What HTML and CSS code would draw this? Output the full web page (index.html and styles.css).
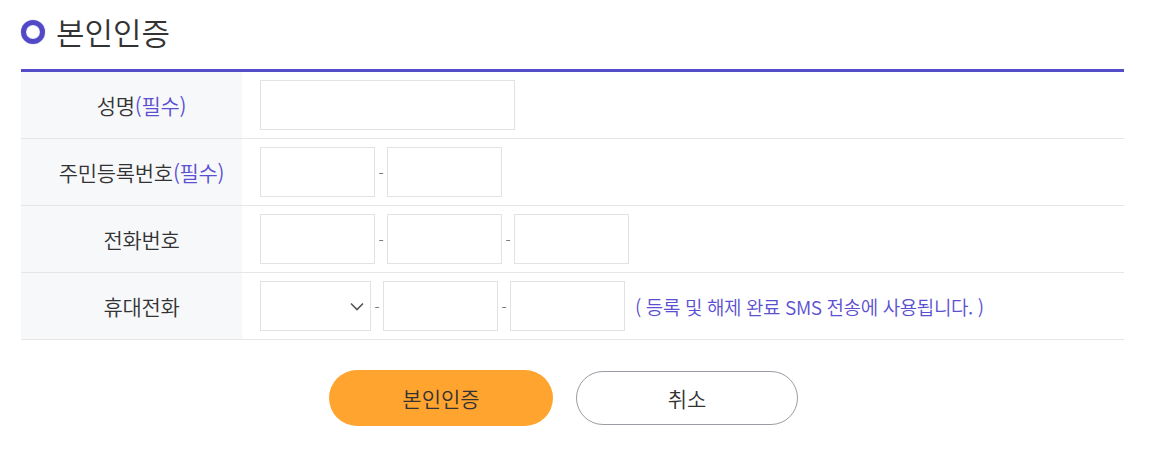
FILE: index.html
```html
<!DOCTYPE html>
<html lang="ko">
<head>
<meta charset="utf-8">
<title>본인인증</title>
<link rel="stylesheet" href="styles.css">
</head>
<body>
<div class="wrap">
  <h2 class="title"><span class="ring"></span>본인인증</h2>
  <div class="form">
    <div class="row">
      <div class="label">성명<em>(필수)</em></div>
      <div class="field"><input class="inp wide" type="text"></div>
    </div>
    <div class="row">
      <div class="label">주민등록번호<em>(필수)</em></div>
      <div class="field"><input class="inp" type="text"><span class="dash">-</span><input class="inp" type="password"></div>
    </div>
    <div class="row">
      <div class="label">전화번호</div>
      <div class="field"><input class="inp" type="text"><span class="dash">-</span><input class="inp" type="text"><span class="dash">-</span><input class="inp" type="text"></div>
    </div>
    <div class="row">
      <div class="label">휴대전화</div>
      <div class="field">
        <div class="sel"><select><option></option><option>010</option><option>011</option></select>
          <svg class="chev" width="14" height="9" viewBox="0 0 14 9"><path d="M1 1.5 L7 7.5 L13 1.5" fill="none" stroke="#555" stroke-width="1.6"/></svg>
        </div><span class="dash">-</span><input class="inp" type="text"><span class="dash">-</span><input class="inp" type="text"><span class="notice">( 등록 및 해제 완료 SMS 전송에 사용됩니다. )</span>
      </div>
    </div>
  </div>
  <div class="btns">
    <button class="btn primary" type="button">본인인증</button>
    <button class="btn cancel" type="button">취소</button>
  </div>
</div>
</body>
</html>
```
FILE: styles.css
```css
* { box-sizing: border-box; }
body {
  margin: 0;
  background: #fff;
  font-family: "Noto Sans CJK KR", "Noto Sans", sans-serif;
  font-weight: 350;
  color: #333;
}
.wrap {
  width: 1103px;
  margin-left: 21px;
}
.title {
  display: flex;
  align-items: flex-start;
  margin: 0;
  padding-top: 11px;
  height: 72px;
  font-size: 31px;
  font-weight: 350;
  line-height: 42px;
  color: #333;
  border-bottom: 3px solid #544cc8;
}
.ring {
  width: 24px;
  height: 24px;
  border-radius: 50%;
  border: 5px solid #5149c6;
  box-shadow: 0 0 1px #7b74d8, inset 0 0 1px #7b74d8;
  margin: 9px 11px 0 0;
}
.form { display: flex; flex-direction: column; }
.row {
  display: flex;
  height: 67px;
  border-bottom: 1px solid #e6e6e6;
}
.label {
  width: 221px;
  background: #f7f8fa;
  display: flex;
  align-items: center;
  justify-content: center;
  padding-left: 20px;
  font-size: 21px;
  letter-spacing: -0.3px;
  color: #333;
}
.label em { font-style: normal; color: #5a50d0; }
.field {
  display: flex;
  align-items: center;
  padding-left: 18px;
}
.inp {
  width: 115px;
  height: 50px;
  border: 1px solid #e2e2e2;
  background: #fff;
  margin: 0;
  padding: 0 8px;
  font: inherit;
}
.inp.wide { width: 255px; }
.dash {
  width: 12px;
  text-align: center;
  font-size: 15px;
  color: #777;
}
.sel {
  position: relative;
  width: 111px;
  height: 50px;
}
.sel select {
  appearance: none;
  -webkit-appearance: none;
  width: 100%;
  height: 100%;
  border: 1px solid #e2e2e2;
  background: #fff;
  border-radius: 0;
  font: inherit;
  margin: 0;
}
.chev {
  position: absolute;
  right: 7px;
  top: 21px;
  pointer-events: none;
}
.notice {
  margin-left: 10px;
  font-size: 19px;
  letter-spacing: -0.4px;
  color: #5a50d0;
}
.btns {
  display: flex;
  justify-content: center;
  align-items: center;
  gap: 23px;
  margin-top: 30px;
  padding-right: 18px;
}
.btn {
  font: inherit;
  font-size: 21px;
  color: #333;
  border-radius: 28px;
  cursor: pointer;
}
.primary {
  width: 224px;
  height: 56px;
  background: #ffa42f;
  border: 0;
}
.cancel {
  width: 222px;
  height: 54px;
  background: #fff;
  border: 1px solid #9a9ca4;
}
```
